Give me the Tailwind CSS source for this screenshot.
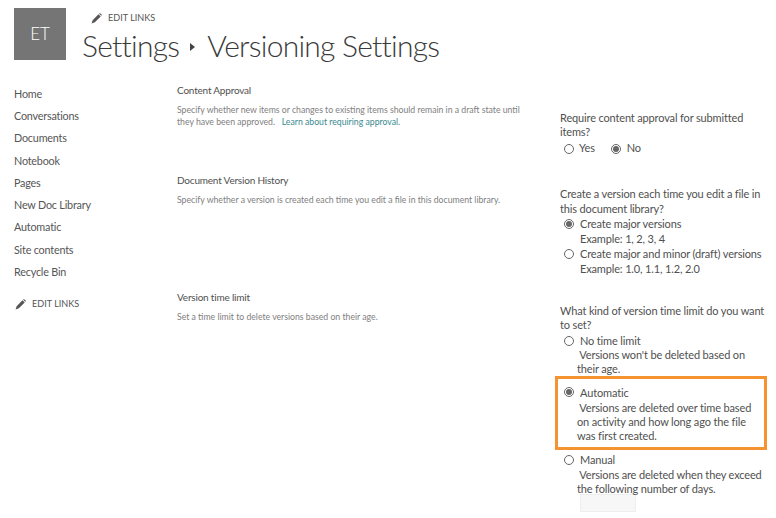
<!DOCTYPE html>
<html><head><meta charset="utf-8"><script src="https://cdn.jsdelivr.net/npm/@tailwindcss/browser@4"></script></head>
<body class="w-[776px] h-[518px] overflow-hidden bg-white text-[#505050] font-['Lato','Open_Sans',sans-serif]">
<header class="flex h-[68px] pt-2 pl-[14px]">
  <div class="w-[52px] h-[52px] bg-[#757575] text-white text-[17px] font-light flex items-center justify-center">ET</div>
  <div class="ml-[16px]">
    <div class="flex items-center h-5 pl-[9px] gap-[6px] text-[9.1px] text-[#555]">
      <svg width="11" height="11" viewBox="0 0 10 10"><path d="M0.5 9.5 L1.5 6.5 L6.8 1.2 L8.8 3.2 L3.5 8.5 Z M7.4 .7 L8.1 0 L10 1.9 L9.3 2.6 Z" fill="#555"/></svg>
      <span>EDIT LINKS</span>
    </div>
    <h1 class="text-[30px] tracking-[-0.75px] font-light leading-[34px] text-[#3a3a3a] flex items-center whitespace-nowrap">Settings<svg class="ml-[11px] mr-[12px] mt-1" width="5" height="8" viewBox="0 0 5 8"><path d="M0 0 L5 4 L0 8 Z" fill="#444"/></svg>Versioning Settings</h1>
  </div>
</header>
<div class="flex">
  <nav class="w-[177px] shrink-0 pl-[14px] pt-[14.8px] text-[10.8px] tracking-[-0.2px] text-[#555]">
    <ul class="flex flex-col">
      <li class="h-[22.25px] leading-[22px]">Home</li>
      <li class="h-[22.25px] leading-[22px]">Conversations</li>
      <li class="h-[22.25px] leading-[22px]">Documents</li>
      <li class="h-[22.25px] leading-[22px]">Notebook</li>
      <li class="h-[22.25px] leading-[22px]">Pages</li>
      <li class="h-[22.25px] leading-[22px]">New Doc Library</li>
      <li class="h-[22.25px] leading-[22px]">Automatic</li>
      <li class="h-[22.25px] leading-[22px]">Site contents</li>
      <li class="h-[22.25px] leading-[22px]">Recycle Bin</li>
    </ul>
    <div class="flex items-center gap-[6px] mt-[14px] pl-[1px] text-[9.1px] tracking-normal h-[14px]">
      <svg width="11" height="11" viewBox="0 0 10 10"><path d="M0.5 9.5 L1.5 6.5 L6.8 1.2 L8.8 3.2 L3.5 8.5 Z M7.4 .7 L8.1 0 L10 1.9 L9.3 2.6 Z" fill="#555"/></svg>
      <span>EDIT LINKS</span>
    </div>
  </nav>
  <main class="flex-1 pt-[15px]">
    <section class="flex h-[90px]">
      <div class="w-[383px] shrink-0">
        <h2 class="text-[10px] tracking-[-0.2px] leading-[14px]">Content Approval</h2>
        <p class="mt-[7px] text-[8.7px] leading-[12px] text-[#808080] w-[347px]">Specify whether new items or changes to existing items should remain in a draft state until they have been approved. &nbsp; <span class="text-[#3a8a8f]">Learn about requiring approval.</span></p>
      </div>
      <div class="w-[216px] shrink-0 pt-[28px] text-[11px] tracking-[-0.15px] leading-[14.2px]">
        <p class="w-[200px]">Require content approval for submitted items?</p>
        <div class="flex items-center mt-[2px] pl-[4px]">
          <span class="w-[10px] h-[10px] rounded-full border border-[#666]"></span><span class="ml-[5px]">Yes</span>
          <span class="ml-[16px] w-[10px] h-[10px] rounded-full border border-[#666] flex items-center justify-center"><span class="w-[6px] h-[6px] rounded-full bg-[#666]"></span></span><span class="ml-[6px]">No</span>
        </div>
      </div>
    </section>
    <section class="flex h-[117px]">
      <div class="w-[383px] shrink-0">
        <h2 class="text-[10px] tracking-[-0.2px] leading-[14px]">Document Version History</h2>
        <p class="mt-[7px] text-[8.7px] leading-[12px] text-[#808080]">Specify whether a version is created each time you edit a file in this document library.</p>
      </div>
      <div class="w-[216px] shrink-0 pt-[14px] text-[11px] tracking-[-0.15px] leading-[14.9px]">
        <p class="w-[205px]">Create a version each time you edit a file in this document library?</p>
        <div class="flex pl-[4px]">
          <span class="mt-[2px] w-[10px] h-[10px] shrink-0 rounded-full border border-[#666] flex items-center justify-center"><span class="w-[6px] h-[6px] rounded-full bg-[#666]"></span></span>
          <span class="ml-[6px]">Create major versions<br>Example: 1, 2, 3, 4</span>
        </div>
        <div class="flex pl-[4px]">
          <span class="mt-[2px] w-[10px] h-[10px] shrink-0 rounded-full border border-[#666]"></span>
          <span class="ml-[6px] whitespace-nowrap">Create major and minor (draft) versions<br>Example: 1.0, 1.1, 1.2, 2.0</span>
        </div>
      </div>
    </section>
    <section class="flex">
      <div class="w-[383px] shrink-0">
        <h2 class="text-[10px] tracking-[-0.2px] leading-[14px]">Version time limit</h2>
        <p class="mt-[7px] text-[8.7px] leading-[12px] text-[#808080]">Set a time limit to delete versions based on their age.</p>
      </div>
      <div class="w-[216px] shrink-0 pt-[14px] text-[11px] tracking-[-0.15px] leading-[14.3px]">
        <p class="w-[210px]">What kind of version time limit do you want to set?</p>
        <div class="relative pl-[17px] w-[190px] mt-[1px]">
          <span class="absolute left-[4px] top-[2px] w-[10px] h-[10px] rounded-full border border-[#666]"></span>
          <span class="block pl-[3px]">No time limit</span>
          <p>&nbsp;Versions won't be deleted based on their age.</p>
        </div>
        <div class="relative -ml-[5px] mt-[0px] w-[212px] h-[74px] border-[3px] border-[#f59331] pl-[19px] pt-[7px]">
          <span class="absolute left-[6px] top-[8px] w-[10px] h-[10px] rounded-full border border-[#666] flex items-center justify-center"><span class="w-[6px] h-[6px] rounded-full bg-[#666]"></span></span>
          <span class="block pl-[3px]">Automatic</span>
          <p class="w-[186px]">&nbsp;Versions are deleted over time based on activity and how long ago the file was first created.</p>
        </div>
        <div class="relative pl-[17px] w-[200px] mt-[3px]">
          <span class="absolute left-[4px] top-[2px] w-[10px] h-[10px] rounded-full border border-[#666]"></span>
          <span class="block pl-[3px]">Manual</span>
          <p class="w-[185px]">&nbsp;Versions are deleted when they exceed the following number of days.</p>
          <div class="ml-[3px] mt-[-2px] w-[56px] h-[18px] bg-[#f7f7f7] border border-[#eee]"></div>
        </div>
      </div>
    </section>
  </main>
</div>
</body></html>
